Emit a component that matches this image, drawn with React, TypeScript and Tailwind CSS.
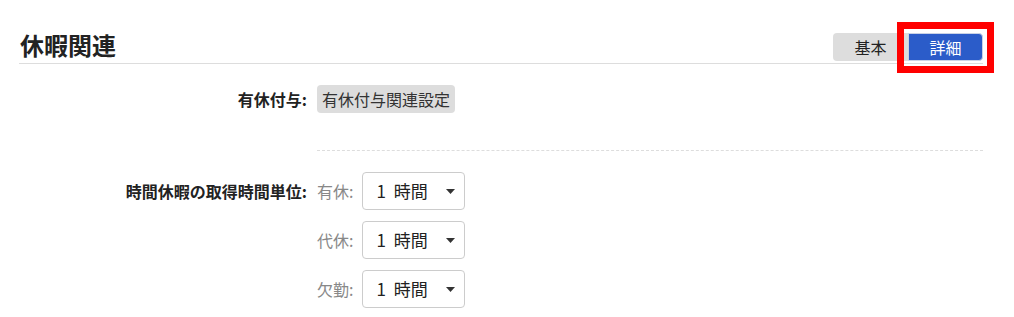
const font = { fontFamily: '"Noto Sans CJK JP", "Noto Sans", sans-serif' };

function Caret() {
  return (
    <svg width="9" height="5" viewBox="0 0 9 5" className="shrink-0">
      <path d="M0 0 L9 0 L4.5 5 Z" fill="#333" />
    </svg>
  );
}

function UnitSelect({ label, value }: { label: string; value: string }) {
  return (
    <div className="flex items-center">
      <span className="text-[16px] leading-none text-[#888]">{label}:</span>
      <button className="ml-[9px] flex h-[38px] w-[103px] items-center justify-between rounded-[4px] border border-[#ccc] bg-white pl-[13px] pr-[9px] text-[17px] text-[#222]">
        <span className="[word-spacing:4px]">{value}</span>
        <Caret />
      </button>
    </div>
  );
}

export default function App() {
  return (
    <div className="min-h-screen bg-white pt-[31px]" style={font}>
      <div className="ml-[19px] w-[964px]">
        <header className="flex items-end justify-between border-b border-[#ddd]">
          <h1 className="mb-[4px] ml-[1px] text-[24px] font-bold leading-[28px] text-[#222]">休暇関連</h1>
          <div className="mb-[2px] flex">
            <button className="h-[28px] w-[75px] rounded-l-[4px] bg-[#dddddd] text-[16px] text-[#222]">基本</button>
            <div className="relative">
              <button className="h-[28px] w-[75px] rounded-r-[4px] border border-[#c9d2e6] bg-[#2b5cc9] text-[16px] text-white">
                詳細
              </button>
              <div className="pointer-events-none absolute -top-[11px] -bottom-[12px] -left-[11px] -right-[11px] border-[7px] border-[#ff0000]" />
            </div>
          </div>
        </header>

        <div className="mt-[21px] flex items-center">
          <div className="w-[288px] text-right text-[16px] font-bold text-[#222]">有休付与:</div>
          <button className="ml-[10px] h-[28px] rounded-[4px] bg-[#dddddd] px-[5px] text-[16px] text-[#333]">
            有休付与関連設定
          </button>
        </div>

        <div className="ml-[298px] mt-[37px] border-t border-dashed border-[#dddddd]" />

        <div className="mt-[21px] flex items-start">
          <div className="flex h-[38px] w-[288px] items-center justify-end text-[16px] font-bold text-[#222]">
            時間休暇の取得時間単位:
          </div>
          <div className="ml-[10px] flex flex-col items-start gap-[11px]">
            <UnitSelect label="有休" value="1 時間" />
            <UnitSelect label="代休" value="1 時間" />
            <UnitSelect label="欠勤" value="1 時間" />
          </div>
        </div>
      </div>
    </div>
  );
}
